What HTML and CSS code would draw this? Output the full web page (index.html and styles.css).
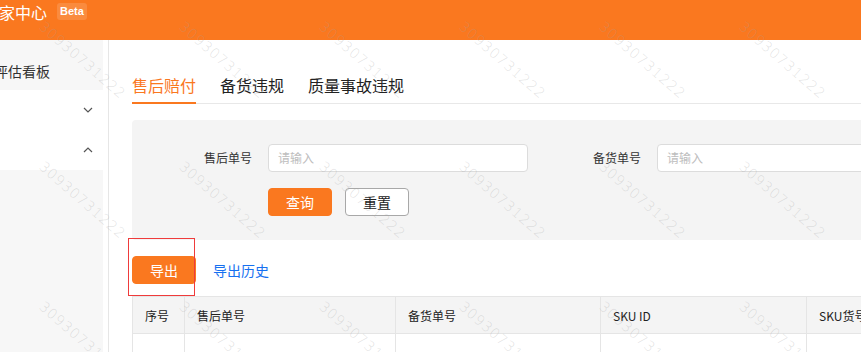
FILE: index.html
```html
<!DOCTYPE html>
<html lang="zh-CN">
<head>
<meta charset="utf-8">
<title>商家中心</title>
<link rel="stylesheet" href="styles.css">
</head>
<body>
<div class="app">
  <header class="topbar">
    <span class="brand">商家中心</span>
    <span class="beta">Beta</span>
  </header>
  <div class="layout">
    <aside class="sidebar">
      <div class="menu">
        <div class="menu-item active"><span class="cut">评估看板</span></div>
        <div class="menu-item group">
          <svg class="chev" width="10" height="6" viewBox="0 0 10 6"><polyline points="1,1 5,5 9,1" fill="none" stroke="#555" stroke-width="1.2"/></svg>
        </div>
        <div class="menu-item group">
          <svg class="chev" width="10" height="6" viewBox="0 0 10 6"><polyline points="1,5 5,1 9,5" fill="none" stroke="#555" stroke-width="1.2"/></svg>
        </div>
        <div class="submenu">
          <div class="sub-item"></div>
          <div class="sub-item"></div>
          <div class="sub-item"></div>
          <div class="sub-item"></div>
          <div class="sub-item"><span class="cut-half">手册</span></div>
        </div>
      </div>
    </aside>
    <main class="main">
      <nav class="tabs">
        <span class="tab active">售后赔付</span>
        <span class="tab">备货违规</span>
        <span class="tab">质量事故违规</span>
      </nav>
      <section class="filter">
        <div class="form-row">
          <label class="form-label">售后单号</label>
          <div class="input">请输入</div>
          <label class="form-label">备货单号</label>
          <div class="input">请输入</div>
        </div>
        <div class="actions">
          <button class="btn btn-primary">查询</button>
          <button class="btn btn-default">重置</button>
        </div>
      </section>
      <div class="toolbar">
        <button class="btn btn-primary">导出</button>
        <a class="link">导出历史</a>
        <span class="highlight"></span>
      </div>
      <table class="grid">
        <colgroup>
          <col class="c1"><col class="c2"><col class="c3"><col class="c4"><col class="c5">
        </colgroup>
        <thead>
          <tr><th>序号</th><th>售后单号</th><th>备货单号</th><th>SKU ID</th><th>SKU货号</th></tr>
        </thead>
        <tbody>
          <tr><td></td><td></td><td></td><td></td><td></td></tr>
        </tbody>
      </table>
    </main>
  </div>
  <div class="watermark">
    <span>30930731222</span><span>30930731222</span><span>30930731222</span><span>30930731222</span><span>30930731222</span><span>30930731222</span>
    <span>30930731222</span><span>30930731222</span><span>30930731222</span><span>30930731222</span><span>30930731222</span><span>30930731222</span>
    <span>30930731222</span><span>30930731222</span><span>30930731222</span><span>30930731222</span><span>30930731222</span><span>30930731222</span>
  </div>
</div>
</body>
</html>
```
FILE: styles.css
```css
* { box-sizing: border-box; }
html, body { margin: 0; padding: 0; }
body {
  font-family: "Noto Sans CJK SC", "Liberation Sans", sans-serif;
  color: #333;
  background: #fff;
}
.app {
  position: relative;
  width: 861px;
  height: 352px;
  overflow: hidden;
}
.topbar {
  height: 40px;
  background: #fa781f;
  display: flex;
  align-items: flex-start;
  padding-top: 2px;
  color: #fff;
}
.brand {
  font-size: 16px;
  line-height: 20px;
  margin-left: -17px;
  font-weight: 400;
}
.beta {
  margin-left: 10px;
  margin-top: 1px;
  background: rgba(255, 255, 255, 0.14);
  border-radius: 3px;
  font-family: "Liberation Sans", sans-serif;
  font-weight: bold;
  font-size: 11px;
  line-height: 17px;
  padding: 0 3px;
}
.layout {
  display: flex;
  align-items: stretch;
  height: 312px;
}
.sidebar {
  width: 109px;
  flex: none;
  border-right: 1px solid #e6e6e6;
  overflow: hidden;
}
.menu { width: 103px; }
.menu-item {
  height: 40px;
  display: flex;
  align-items: center;
  justify-content: flex-end;
  padding-right: 10px;
  font-size: 14px;
  white-space: nowrap;
}
.menu-item.active {
  height: 50px;
  background: #f7f7f7;
  justify-content: flex-start;
  padding-top: 12px;
}
.cut { margin-left: -6px; }
.chev { display: block; }
.submenu {
  background: #f7f7f7;
  height: 200px;
  padding-top: 1px;
}
.sub-item {
  height: 40px;
  display: flex;
  align-items: center;
  font-size: 14px;
  white-space: nowrap;
  overflow: hidden;
}
.cut-half { margin-left: -21px; margin-top: 18px; }
.main {
  flex: none;
  width: 1100px;
  padding-left: 23px;
}
.tabs {
  display: flex;
  gap: 24px;
  height: 64px;
  box-shadow: inset 0 -1px 0 #e8e8e8;
}
.tab {
  font-size: 16px;
  line-height: 24px;
  padding-top: 33px;
  color: #222;
  border-bottom: 2px solid transparent;
}
.tab.active {
  color: #fa781f;
  border-bottom-color: #fa781f;
}
.filter {
  margin-top: 16px;
  background: #f4f4f4;
  border-radius: 4px;
  padding: 24px 0 24px 7px;
}
.form-row { display: flex; }
.form-label {
  width: 129px;
  padding-right: 16px;
  text-align: right;
  font-size: 12px;
  line-height: 28px;
  color: #333;
}
.input {
  width: 260px;
  height: 28px;
  background: #fff;
  border: 1px solid #dcdcdc;
  border-radius: 4px;
  padding: 0 9px;
  font-size: 12px;
  line-height: 26px;
  color: #bdbdbd;
}
.actions {
  display: flex;
  gap: 13px;
  margin-top: 16px;
  margin-left: 129px;
}
.btn {
  width: 64px;
  height: 28px;
  border-radius: 4px;
  font-family: inherit;
  font-size: 14px;
  line-height: 26px;
  padding: 0;
  cursor: pointer;
}
.btn-primary {
  background: #fa781f;
  border: 1px solid #fa781f;
  color: #fff;
}
.btn-default {
  background: #fff;
  border: 1px solid #a8a8a8;
  color: #222;
}
.toolbar {
  position: relative;
  display: flex;
  align-items: center;
  margin-top: 16px;
}
.link {
  margin-left: 17px;
  font-size: 14px;
  color: #1670f0;
}
.highlight {
  position: absolute;
  left: -4px;
  top: -18px;
  width: 67px;
  height: 58px;
  border: 1px solid #ef3b3b;
}
.grid {
  margin-top: 12px;
  border-collapse: collapse;
  table-layout: fixed;
  width: 1073px;
}
.c1 { width: 52px; }
.c2 { width: 211px; }
.c3 { width: 205px; }
.c4 { width: 206px; }
.c5 { width: 399px; }
.grid th, .grid td {
  border: 1px solid #e5e5e5;
  text-align: left;
  padding: 0 12px;
}
.grid th {
  height: 37px;
  background: #f4f4f4;
  font-size: 12px;
  font-weight: 400;
  color: #222;
}
.grid td { height: 40px; }
.watermark {
  position: absolute;
  left: 0;
  top: 0;
  width: 861px;
  height: 352px;
  pointer-events: none;
  display: grid;
  grid-template-columns: repeat(6, 140px);
  grid-auto-rows: 140px;
  padding: 19px 0 0 46px;
}
.watermark span {
  display: block;
  width: max-content;
  height: 15px;
  transform: rotate(41deg);
  transform-origin: 0 0;
  font-family: "DejaVu Sans", sans-serif;
  font-weight: 200;
  font-size: 14px;
  line-height: 15px;
  letter-spacing: 1px;
  color: rgba(160, 160, 160, 0.3);
  white-space: nowrap;
}
```
